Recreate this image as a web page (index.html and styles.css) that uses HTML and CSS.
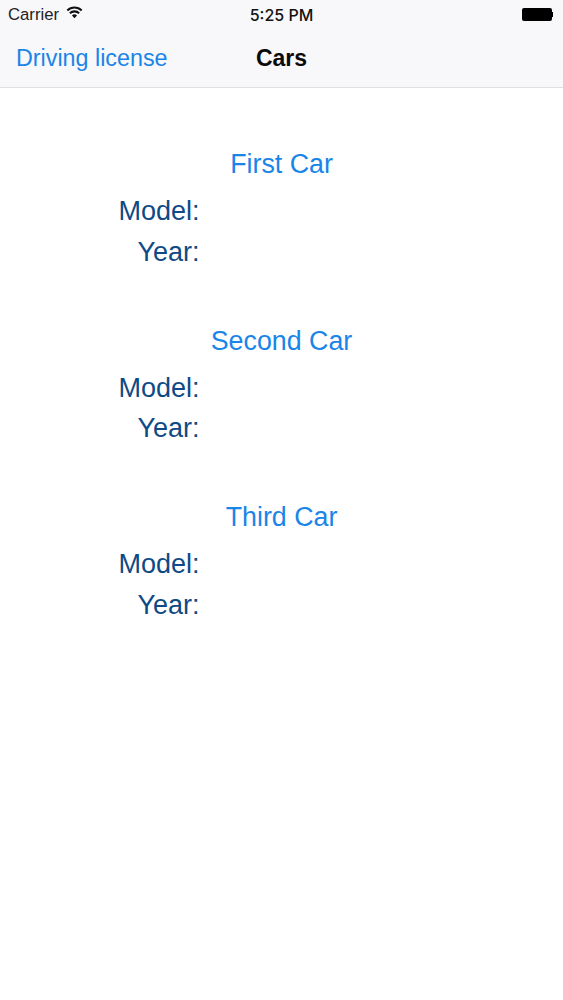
FILE: index.html
```html
<!DOCTYPE html>
<html lang="en">
<head>
<meta charset="utf-8">
<title>Cars</title>
<link rel="stylesheet" href="styles.css">
</head>
<body>
<header class="nav">
  <div class="status">
    <div class="status-left">
      <span>Carrier</span>
      <svg class="wifi" viewBox="0 0 16 12" width="17" height="13"><path d="M8 11.5 5.600 8.800a3.400 3.400 0 0 1 4.800 0zM4.300 7.500 3 6a7 7 0 0 1 10 0l-1.300 1.500a5.200 5.200 0 0 0-7.400 0zM1.900 4.800.6 3.300a10.500 10.500 0 0 1 14.800 0l-1.300 1.500a8.700 8.700 0 0 0-12.200 0z"/></svg>
    </div>
    <span class="time">5:25 PM</span>
    <div class="battery"><div class="battery-body"></div><div class="battery-tip"></div></div>
  </div>
  <div class="bar">
    <span class="back">Driving license</span>
    <span class="title">Cars</span>
  </div>
</header>
<main class="list">
  <section class="car">
    <h2>First Car</h2>
    <div class="row">Model:</div>
    <div class="row">Year:</div>
  </section>
  <section class="car">
    <h2>Second Car</h2>
    <div class="row">Model:</div>
    <div class="row">Year:</div>
  </section>
  <section class="car">
    <h2>Third Car</h2>
    <div class="row">Model:</div>
    <div class="row">Year:</div>
  </section>
</main>
</body>
</html>
```
FILE: styles.css
```css
* { box-sizing: border-box; }
html, body { margin: 0; padding: 0; background: #fff; }
body { width: 563px; height: 1000px; overflow: hidden; font-family: "Liberation Sans", Arial, sans-serif; }
.nav { height: 88px; background: #f8f7fa; border-bottom: 1px solid #e0dfe3; }
.status { position: relative; height: 29px; display: flex; align-items: center; justify-content: space-between; padding: 0 10px 0 8px; font-size: 16.700px; color: #222; }
.status-left { display: flex; align-items: center; gap: 7px; }
.wifi { fill: #111; margin-top: -4px; }
.time { position: absolute; left: 0; right: 0; text-align: center; font-family: Inter, "Liberation Sans", sans-serif; font-weight: 500; font-size: 16px; color: #111; }
.battery { display: flex; align-items: center; }
.battery-body { width: 30px; height: 13px; background: #000; border-radius: 2px; }
.battery-tip { width: 1px; height: 5px; background: #000; }
.bar { position: relative; height: 58px; display: flex; align-items: center; padding: 0 16px; }
.back { font-size: 23.300px; color: #1a85e8; }
.title { position: absolute; left: 0; right: 0; text-align: center; font-size: 23px; font-weight: 700; color: #0a0a0a; }
.list { display: flex; flex-direction: column; padding-top: 58px; gap: 50.500px; }
.car { display: flex; flex-direction: column; }
.car h2 { margin: 0 0 9px; height: 36px; line-height: 36px; text-align: center; font-size: 26.800px; font-weight: 400; color: #1a85e8; }
.row { width: 199.500px; height: 40.500px; line-height: 40.500px; text-align: right; font-size: 27px; color: #0f4a85; }
```
